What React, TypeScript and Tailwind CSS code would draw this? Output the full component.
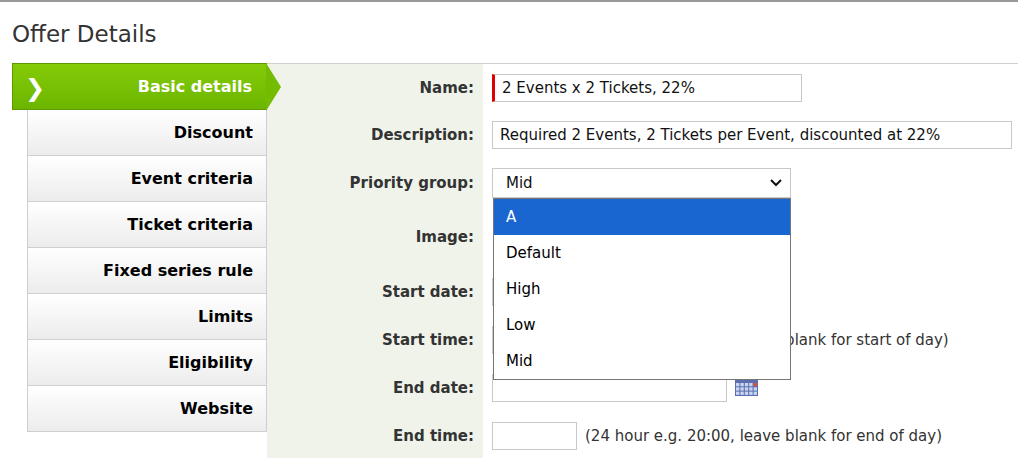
import React from 'react';

const font = { fontFamily: '"DejaVu Sans", Verdana, sans-serif' };

const tabs = ['Discount', 'Event criteria', 'Ticket criteria', 'Fixed series rule', 'Limits', 'Eligibility', 'Website'];

function Row({ label, h, children }: { label: string; h: string; children?: React.ReactNode }) {
  return (
    <div className={`flex items-center ${h}`}>
      <div className="w-[216px] h-full bg-[#f0f3ea] flex items-center justify-end pr-[9px] text-[15px] font-bold text-[#333]">{label}</div>
      <div className="flex-1 h-full flex items-center pl-[9px]">{children}</div>
    </div>
  );
}

const input = 'h-[28px] border border-[#c8c8c8] bg-white px-[7px] text-[15px] text-[#111] flex items-center';

export default function App() {
  return (
    <div className="w-[1018px] h-[462px] bg-white overflow-hidden border-t-2 border-[#999]" style={font}>
      <div className="h-[61px] pl-[12px] pt-[15px] text-[23px] text-[#333]">Offer Details</div>
      <div className="flex">
        <div className="w-[255px] ml-[12px] shrink-0 relative z-10">
          <div className="relative h-[47px] bg-gradient-to-b from-[#84cc08] to-[#6cb500] border border-[#5c9a00] flex items-center justify-end pr-[14px] text-white font-bold text-[16px]">
            <span className="absolute left-[12px] top-[6px] text-[24px] font-normal">❯</span>
            Basic details
            <div className="absolute right-[-15px] top-[-1px] w-0 h-0 border-t-[24px] border-b-[24px] border-l-[15px] border-t-transparent border-b-transparent border-l-[#74bb04]" />
          </div>
          {tabs.map((t) => (
            <div key={t} className="ml-[15px] h-[46px] bg-gradient-to-b from-white to-[#ececec] border border-t-0 border-[#cfcfcf] flex items-center justify-end pr-[13px] font-bold text-[16px] text-black">{t}</div>
          ))}
        </div>
        <div className="flex-1 border-t border-[#d0d0d0] relative">
          <Row label="Name:" h="h-[48px]">
            <div className={`${input} w-[310px] border-l-[3px] border-l-[#e00000]`}>2 Events x 2 Tickets, 22%</div>
          </Row>
          <Row label="Description:" h="h-[46px]">
            <div className={`${input} w-[520px]`}>Required 2 Events, 2 Tickets per Event, discounted at 22%</div>
          </Row>
          <Row label="Priority group:" h="h-[50px]">
            <div className="relative">
              <div className={`${input} w-[299px] h-[30px] justify-between pl-[13px]`}>
                <span>Mid</span>
                <svg width="14" height="10" viewBox="0 0 14 10"><path d="M2 2l5 5 5-5" fill="none" stroke="#111" strokeWidth="2" /></svg>
              </div>
              <div className="absolute left-[1px] top-[30px] w-[298px] bg-white border border-[#767676] text-[15px] text-black z-20">
                {['A', 'Default', 'High', 'Low', 'Mid'].map((o, i) => (
                  <div key={o} className={`h-[36px] flex items-center pl-[12px] ${i === 0 ? 'bg-[#1a66d1] text-white' : ''}`}>{o}</div>
                ))}
              </div>
            </div>
          </Row>
          <Row label="Image:" h="h-[58px]" />
          <Row label="Start date:" h="h-[52px]">
            <div className={`${input} w-[235px]`} />
          </Row>
          <Row label="Start time:" h="h-[44px]">
            <div className={`${input} w-[85px]`} />
            <span className="ml-[8px] text-[15px] text-[#333]">(24 hour e.g. 09:00, leave blank for start of day)</span>
          </Row>
          <Row label="End date:" h="h-[52px]">
            <div className={`${input} w-[235px]`} />
            <svg className="ml-[8px]" width="23" height="16" viewBox="0 0 23 16">
              <rect x="0" y="0" width="23" height="16" fill="#5a6fb0" />
              {[0, 1, 2, 3, 4].map((c) => [0, 1, 2].map((r) => (
                <rect key={`${c}-${r}`} x={1 + c * 4.4} y={3 + r * 4.3} width="3.4" height="3.3" fill={c === 4 && r === 0 ? '#e05030' : '#c8d4f0'} />
              )))}
            </svg>
          </Row>
          <Row label="End time:" h="h-[44px]">
            <div className={`${input} w-[85px]`} />
            <span className="ml-[8px] text-[15px] text-[#333]">(24 hour e.g. 20:00, leave blank for end of day)</span>
          </Row>
        </div>
      </div>
    </div>
  );
}
